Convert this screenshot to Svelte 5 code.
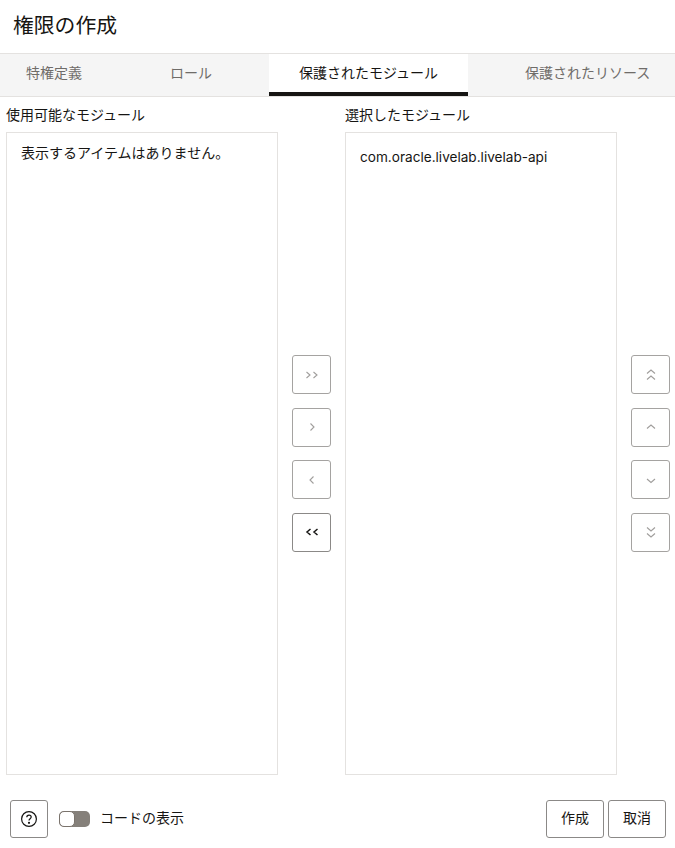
<script lang="ts">
  const tabs = [
    { id: 'def', label: '特権定義' },
    { id: 'role', label: 'ロール' },
    { id: 'mod', label: '保護されたモジュール' },
    { id: 'res', label: '保護されたリソース' },
  ];

  let active = $state('mod');
  let showCode = $state(false);

  const transfer = [
    { id: 'all-right', d: 'M2.5 5l3.5 3-3.5 3M9.5 5l3.5 3-3.5 3', on: false },
    { id: 'right', d: 'M6.5 4.5l3.5 3.5-3.5 3.5', on: false },
    { id: 'left', d: 'M9.5 4.5L6 8l3.5 3.5', on: false },
    { id: 'all-left', d: 'M6.5 5L3 8l3.5 3M13.5 5L10 8l3.5 3', on: true },
  ];

  const ordering = [
    { id: 'top', d: 'M4 6.5l4-3.5 4 3.5M4 12.5L8 9l4 3.5' },
    { id: 'up', d: 'M4 9.5L8 6l4 3.5' },
    { id: 'down', d: 'M4 7l4 3.5L12 7' },
    { id: 'bottom', d: 'M4 3.5L8 7l4-3.5M4 9.5L8 13l4-3.5' },
  ];
</script>

{#snippet chevrons(d: string, on: boolean)}
  <svg width="16" height="16" viewBox="0 0 16 16" fill="none" stroke="currentColor" stroke-width={on ? 1.5 : 1.1}>
    <path {d} />
  </svg>
{/snippet}

<div class="dialog">
  <h1>権限の作成</h1>

  <div class="tabs">
    {#each tabs as tab}
      <button class="tab tab-{tab.id}" class:active={active === tab.id} onclick={() => (active = tab.id)}>
        {tab.label}
      </button>
    {/each}
  </div>

  <div class="shuttle">
    <div class="column">
      <div class="col-label">使用可能なモジュール</div>
      <div class="list empty">表示するアイテムはありません。</div>
    </div>

    <div class="actions">
      {#each transfer as t}
        <button class="icon-btn" class:on={t.on} aria-label={t.id}>
          {@render chevrons(t.d, t.on)}
        </button>
      {/each}
    </div>

    <div class="column">
      <div class="col-label">選択したモジュール</div>
      <div class="list">
        <div class="item">com.oracle.livelab.livelab-api</div>
      </div>
    </div>

    <div class="actions">
      {#each ordering as o}
        <button class="icon-btn" aria-label={o.id}>
          {@render chevrons(o.d, false)}
        </button>
      {/each}
    </div>
  </div>

  <div class="footer">
    <button class="help" aria-label="help">
      <svg width="18" height="18" viewBox="0 0 18 18" fill="none" stroke="#161513" stroke-width="1.2">
        <circle cx="9" cy="9" r="7.4" />
        <path d="M6.8 7.2c0-1.3 1-2.1 2.2-2.1s2.2.8 2.2 2c0 1.7-2.2 1.7-2.2 3.5" />
        <circle cx="9" cy="12.8" r=".5" fill="#161513" />
      </svg>
    </button>
    <button class="switch" class:checked={showCode} aria-label="コードの表示" onclick={() => (showCode = !showCode)}>
      <span class="knob"></span>
    </button>
    <span class="switch-label">コードの表示</span>
    <div class="spacer"></div>
    <button class="text-btn create">作成</button>
    <button class="text-btn cancel">取消</button>
  </div>
</div>

<style>
  :global(body) {
    background: #fff;
    font-family: Inter, 'Noto Sans CJK JP', sans-serif;
    color: #161513;
  }

  .dialog {
    width: 675px;
    height: 848px;
    display: flex;
    flex-direction: column;
    overflow: hidden;
  }

  h1 {
    margin: 0;
    height: 53px;
    box-sizing: border-box;
    padding: 10px 0 0 13px;
    font-size: 20.8px;
    line-height: 32px;
    font-weight: 400;
  }

  .tabs {
    display: flex;
    height: 44px;
    box-sizing: border-box;
    background: #f5f5f5;
    border-top: 1px solid #e4e2e0;
    border-bottom: 1px solid #e4e2e0;
  }

  .tab {
    border: 0;
    border-bottom: 4px solid transparent;
    background: none;
    padding: 0;
    font: inherit;
    font-size: 14px;
    line-height: 38px;
    height: 42px;
    color: #6f6c69;
    text-align: left;
    cursor: pointer;
    box-sizing: border-box;
    white-space: nowrap;
  }

  .tab-def { width: 138px; padding-left: 26px; }
  .tab-role { width: 131px; padding-left: 32px; }
  .tab-mod { width: 199px; padding-left: 30px; }
  .tab-res { width: 207px; padding-left: 57px; }

  .tab.active {
    background: #fff;
    color: #161513;
    border-bottom-color: #161513;
  }

  .shuttle {
    display: flex;
    padding-left: 6px;
    height: 678px;
  }

  .column {
    flex: none;
    width: 272px;
    display: flex;
    flex-direction: column;
  }

  .col-label {
    height: 35px;
    box-sizing: border-box;
    padding-top: 8px;
    font-size: 14px;
    line-height: 20px;
  }

  .list {
    flex: 1;
    box-sizing: border-box;
    border: 1px solid #e4e2e0;
    padding: 10px 14px;
    font-size: 14px;
    line-height: 20px;
  }

  .item {
    padding-top: 4px;
    font-size: 13.6px;
  }

  .actions {
    flex: none;
    width: 67px;
    padding: 258px 0 0 14px;
    display: flex;
    flex-direction: column;
    gap: 13.67px;
    box-sizing: border-box;
  }

  .actions:last-child {
    width: 58px;
  }

  .icon-btn {
    width: 39px;
    height: 39px;
    box-sizing: border-box;
    padding: 0;
    display: flex;
    align-items: center;
    justify-content: center;
    background: #fff;
    border: 1px solid #a5a3a1;
    border-radius: 3px;
    color: #a09e9c;
    cursor: pointer;
  }

  .icon-btn.on {
    border-color: #8b8987;
    color: #161513;
  }

  .footer {
    flex: 1;
    display: flex;
    align-items: flex-start;
    padding: 25px 9px 0 10px;
  }

  .help {
    width: 38px;
    height: 38px;
    padding: 0;
    box-sizing: border-box;
    display: flex;
    align-items: center;
    justify-content: center;
    background: #fff;
    border: 1px solid #8b8987;
    border-radius: 3px;
    cursor: pointer;
  }

  .switch {
    width: 31px;
    height: 16px;
    margin: 11px 0 0 11px;
    padding: 0;
    border: 0;
    border-radius: 5px;
    background: #85807a;
    position: relative;
    cursor: pointer;
  }

  .knob {
    position: absolute;
    left: 0;
    top: 0;
    width: 16px;
    height: 16px;
    box-sizing: border-box;
    background: #fff;
    border: 1px solid #7a736c;
    border-radius: 5px;
  }

  .switch.checked .knob {
    left: 15px;
  }

  .switch-label {
    margin: 8px 0 0 10px;
    font-size: 14px;
    line-height: 20px;
  }

  .spacer {
    flex: 1;
  }

  .text-btn {
    height: 38px;
    width: 58px;
    padding: 0 0 4px;
    box-sizing: border-box;
    background: #fff;
    border: 1px solid #8b8987;
    border-radius: 3px;
    font: inherit;
    font-size: 14px;
    color: #161513;
    cursor: pointer;
  }

  .cancel {
    margin-left: 4px;
  }
</style>
